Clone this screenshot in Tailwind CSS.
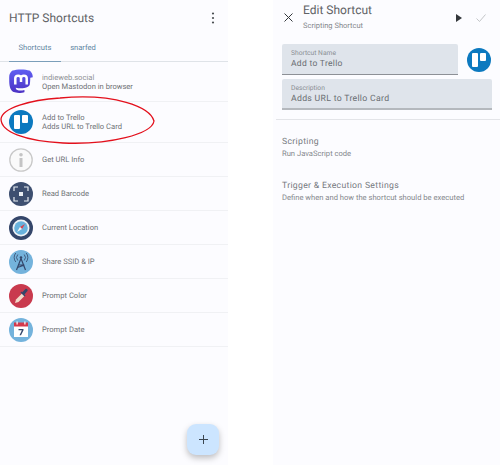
<!doctype html>
<html>
<head>
<meta charset="utf-8">
<script src="https://cdn.jsdelivr.net/npm/@tailwindcss/browser@4"></script>
</head>
<body class="bg-white font-['Roboto',sans-serif] text-[#5f6368] antialiased [text-rendering:geometricPrecision]">
<div class="flex w-[500px] h-[465px] overflow-hidden relative">

  <!-- shortcut list -->
  <div class="w-[228px] h-full bg-[#fcfcff] relative shrink-0">
    <div class="h-[35px] pl-[9px] pr-[13px] flex items-center justify-between">
      <h1 class="text-[12px] text-[#5f6266] font-normal">HTTP Shortcuts</h1>
      <svg width="4" height="12" viewBox="0 0 4 12" class="fill-[#4a4e52]"><circle cx="2" cy="1.500" r="1.100"/><circle cx="2" cy="6" r="1.100"/><circle cx="2" cy="10.500" r="1.100"/></svg>
    </div>
    <div class="h-[27px] flex border-b border-[#dfe3e8] text-[7.6px]">
      <div class="ml-[9px] w-[52px] h-[27px] flex items-center justify-center text-[#5f86a2] border-b-[1.5px] border-[#7b9fba]">Shortcuts</div>
      <div class="w-[44px] flex items-center justify-center text-[#5f86a2]">snarfed</div>
    </div>

    <div class="flex items-center h-[40px] border-b border-[#f0f1f4] pl-[9px] gap-[9px]">
      <svg width="24" height="26" viewBox="0 0 24 26">
        <defs><linearGradient id="m" x1="0" y1="0" x2="0" y2="1"><stop offset="0" stop-color="#5f5ff2"/><stop offset="1" stop-color="#4c32c4"/></linearGradient></defs>
        <path fill="url(#m)" d="M23.800 8.200c0-5-3.500-6.700-3.500-6.700C16.800 0 7.200 0 3.700 1.500c0 0-3.500 1.700-3.500 6.700 0 6-.3 13.500 5.600 15.100 2.200.6 4 .7 5.500.6 2.700-.1 4.200-.9 4.200-.9l-.1-2s-1.900.6-4 .5c-2.100-.1-4.400-.2-4.700-2.800 4.100.9 7.700.4 8.700.3 2.700-.3 5.100-2 5.400-3.500.5-2.400.5-6.800.5-6.800z"/>
        <path fill="none" stroke="#fff" stroke-width="2.500" d="M6.300 15.500V9.300c0-3.400 5.700-3.400 5.700 0v3.700-3.700c0-3.400 5.700-3.400 5.700 0v6.200"/>
      </svg>
      <div class="text-[7.6px] leading-[9px]">
        <div class="text-[#8e9195]">indieweb.social</div>
        <div class="text-[#6f7276]">Open Mastodon in browser</div>
      </div>
    </div>

    <div class="flex items-center h-[41px] border-b border-[#f0f1f4] pl-[9px] gap-[9px]">
      <svg width="24" height="24" viewBox="0 0 24 24"><circle cx="12" cy="12" r="12" fill="#0c79bf"/><rect x="5" y="5" width="6" height="14" rx="1" fill="#fff"/><rect x="13" y="5" width="6" height="8" rx="1" fill="#fff"/></svg>
      <div class="text-[7.6px] leading-[9px] text-[#6f7276]">
        <div>Add to Trello</div>
        <div>Adds URL to Trello Card</div>
      </div>
    </div>

    <div class="flex items-center h-[34px] border-b border-[#f0f1f4] pl-[9px] gap-[9px]">
      <svg width="24" height="24" viewBox="0 0 24 24"><circle cx="12" cy="12" r="11.200" fill="#fafafa" stroke="#c9c9c9" stroke-width="1.300"/><rect x="10.500" y="10" width="3" height="9" fill="#c4c4c4"/><circle cx="12" cy="6.800" r="1.800" fill="#c4c4c4"/></svg>
      <div class="text-[7.6px] text-[#6f7276]">Get URL Info</div>
    </div>

    <div class="flex items-center h-[34px] border-b border-[#f0f1f4] pl-[9px] gap-[9px]">
      <svg width="24" height="24" viewBox="0 0 24 24"><circle cx="12" cy="12" r="12" fill="#3d4f70"/><path d="M5 9V5h4M15 5h4v4M19 15v4h-4M9 19H5v-4" fill="none" stroke="#e8edf2" stroke-width="1.200"/><rect x="10" y="10" width="4" height="4" fill="#e8edf2"/></svg>
      <div class="text-[7.6px] text-[#6f7276]">Read Barcode</div>
    </div>

    <div class="flex items-center h-[34px] border-b border-[#f0f1f4] pl-[9px] gap-[9px]">
      <svg width="24" height="24" viewBox="0 0 24 24"><circle cx="12" cy="12" r="12" fill="#34466a"/><circle cx="12" cy="12" r="8.500" fill="#eef2f5"/><circle cx="12" cy="12" r="6.800" fill="#69b2dc"/><path d="M16 8l-3 5-2-2z" fill="#d9434e"/><path d="M8 16l3-5 2 2z" fill="#f4f4f4"/></svg>
      <div class="text-[7.6px] text-[#6f7276]">Current Location</div>
    </div>

    <div class="flex items-center h-[34px] border-b border-[#f0f1f4] pl-[9px] gap-[9px]">
      <svg width="24" height="24" viewBox="0 0 24 24"><circle cx="12" cy="12" r="12" fill="#74b3dc"/><path d="M12 8.500L7.500 20M12 8.500L16.500 20M9.500 15h5M8.500 17.500l7-2.500" fill="none" stroke="#34466a" stroke-width="1.200"/><circle cx="12" cy="7.500" r="1.300" fill="#34466a"/><path d="M8.800 4.500a4.500 4.500 0 0 0 0 6M15.200 4.500a4.500 4.500 0 0 1 0 6M6.800 3a7 7 0 0 0 0 9M17.200 3a7 7 0 0 1 0 9" fill="none" stroke="#34466a" stroke-width=".8"/></svg>
      <div class="text-[7.6px] text-[#6f7276]">Share SSID &amp; IP</div>
    </div>

    <div class="flex items-center h-[34px] border-b border-[#f0f1f4] pl-[9px] gap-[9px]">
      <svg width="24" height="24" viewBox="0 0 24 24"><circle cx="12" cy="12" r="12" fill="#c93a4e"/><path d="M6 19l1-3.500 6.500-6.500 2.500 2.500L9.500 18z" fill="#f3d9c9"/><path d="M13 8.500l2.500-2.500 1-1c1-.8 2.800 1 2 2l-1 1-2 2.500 1 1-1 1-4-4 1-1z" fill="#34466a"/></svg>
      <div class="text-[7.6px] text-[#6f7276]">Prompt Color</div>
    </div>

    <div class="flex items-center h-[34px] border-b border-[#f0f1f4] pl-[9px] gap-[9px]">
      <svg width="24" height="24" viewBox="0 0 24 24"><circle cx="12" cy="12" r="12" fill="#74b3dc"/><rect x="5" y="5.500" width="14" height="13.500" fill="#fff"/><rect x="5" y="4.500" width="14" height="4" fill="#d3394c"/><rect x="7.500" y="3.500" width="1.200" height="3" fill="#fff"/><rect x="15.300" y="3.500" width="1.200" height="3" fill="#fff"/><path d="M9.500 11h5v1.200l-2.500 5h-1.500l2.400-4.900H9.500z" fill="#34466a"/></svg>
      <div class="text-[7.6px] text-[#6f7276]">Prompt Date</div>
    </div>

    <button class="absolute left-[187px] top-[424px] w-[32px] h-[31px] rounded-[9px] bg-[#cce5ff] shadow-[0_3px_6px_rgba(0,0,0,0.25)] flex items-center justify-center">
      <svg width="9" height="9" viewBox="0 0 9 9"><path d="M4.500 0v9M0 4.500h9" stroke="#3b4650" stroke-width="1"/></svg>
    </button>
  </div>

  <div class="w-[45px] shrink-0"></div>

  <!-- edit form -->
  <div class="flex-1 h-full bg-[#fcfcff]">
    <div class="h-[42px] flex items-start">
      <svg width="9" height="9" viewBox="0 0 9 9" class="ml-[11px] mt-[13px]"><path d="M.5.500l8 8M8.500.500l-8 8" stroke="#33373b" stroke-width="1"/></svg>
      <div class="ml-[10px] pt-[2px]">
        <div class="text-[12px] leading-[16px] text-[#5f6266]">Edit Shortcut</div>
        <div class="text-[7.5px] leading-[11px] mt-[2px] text-[#85888d]">Scripting Shortcut</div>
      </div>
      <svg width="6" height="8" viewBox="0 0 6 8" class="ml-auto mt-[14px]"><path d="M0 0l6 4-6 4z" fill="#33373b"/></svg>
      <svg width="10" height="8" viewBox="0 0 10 8" class="ml-[14px] mr-[14px] mt-[14px]"><path d="M.5 4.500l3 3 6-7" fill="none" stroke="#b5b7ba" stroke-width=".8"/></svg>
    </div>
    <div class="flex items-center mt-[2px] pl-[9px] pr-[8px]">
      <div class="w-[176px] h-[31px] bg-[#dfe4eb] rounded-t-[2px] border-b border-[#8d9096] pl-[9px] pt-[4px]">
        <div class="text-[6.7px] leading-[10px] text-[#8a8e93]">Shortcut Name</div>
        <div class="text-[8.5px] leading-[13px] tracking-[0.3px] text-[#6a6e72]">Add to Trello</div>
      </div>
      <svg width="24" height="24" viewBox="0 0 24 24" class="ml-[9px]"><circle cx="12" cy="12" r="12" fill="#0c79bf"/><rect x="5" y="5" width="6" height="14" rx="1" fill="#fff"/><rect x="13" y="5" width="6" height="8" rx="1" fill="#fff"/></svg>
    </div>
    <div class="mt-[4px] ml-[9px] mr-[8px] h-[31px] bg-[#dfe4eb] rounded-t-[2px] border-b-2 border-[#b4b8bd] pl-[9px] pt-[4px]">
      <div class="text-[6.7px] leading-[10px] text-[#8a8e93]">Description</div>
      <div class="text-[8.7px] leading-[13px] tracking-[0.3px] text-[#6a6e72]">Adds URL to Trello Card</div>
    </div>
    <div class="mt-[9px] border-b border-[#e3e4e8] ml-[3px]"></div>
    <div class="pl-[9px] pt-[16px]">
      <div class="text-[8.7px] leading-[13px] tracking-[0.3px] text-[#777a7f]">Scripting</div>
      <div class="text-[7.6px] leading-[10px] text-[#85888d]">Run JavaScript code</div>
    </div>
    <div class="pl-[9px] pt-[21px]">
      <div class="text-[8.7px] leading-[13px] tracking-[0.3px] text-[#777a7f]">Trigger &amp; Execution Settings</div>
      <div class="text-[7.6px] leading-[10px] text-[#85888d]">Define when and how the shortcut should be executed</div>
    </div>
  </div>

  <!-- hand-drawn annotation over the Trello row -->
  <svg class="absolute left-0 top-0 pointer-events-none" width="500" height="465" viewBox="0 0 500 465"><path d="M60 98C115 93 150 107 154 121 152 134 110 145 63 143 25 141 1 132 1 119 2 108 30 100 60 98z" fill="none" stroke="#e3101c" stroke-width="1.300"/></svg>
</div>
</body>
</html>
